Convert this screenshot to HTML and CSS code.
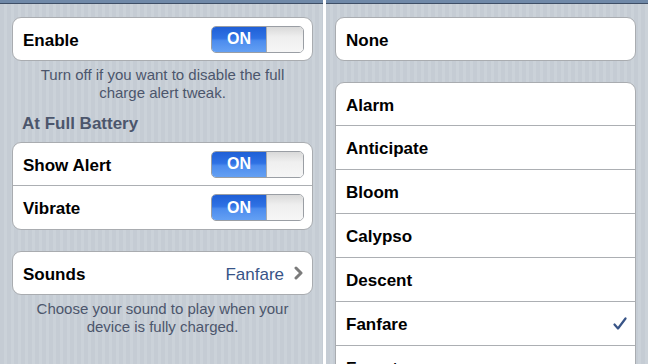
FILE: index.html
```html
<!DOCTYPE html>
<html>
<head>
<meta charset="utf-8">
<link rel="stylesheet" href="styles.css">
</head>
<body>
<div class="screen">
  <div class="panel left">
    <div class="navbar"></div>
    <div class="content">
      <div class="group first">
        <div class="row">
          <span class="label">Enable</span>
          <div class="switch"><div class="on">ON</div><div class="knob"></div></div>
        </div>
      </div>
      <div class="footer">Turn off if you want to disable the full<br>charge alert tweak.</div>
      <div class="header">At Full Battery</div>
      <div class="group">
        <div class="row">
          <span class="label">Show Alert</span>
          <div class="switch"><div class="on">ON</div><div class="knob"></div></div>
        </div>
        <div class="row">
          <span class="label">Vibrate</span>
          <div class="switch"><div class="on">ON</div><div class="knob"></div></div>
        </div>
      </div>
      <div class="group sounds">
        <div class="row">
          <span class="label">Sounds</span>
          <span class="value">Fanfare</span>
          <svg class="chevron" width="10" height="14" viewBox="0 0 10 14"><polyline points="2,2 7,7 2,12" fill="none" stroke="#7b7b7b" stroke-width="3" stroke-linecap="round" stroke-linejoin="round"/></svg>
        </div>
      </div>
      <div class="footer">Choose your sound to play when your<br>device is fully charged.</div>
    </div>
  </div>
  <div class="gap"></div>
  <div class="panel right">
    <div class="navbar"></div>
    <div class="content">
      <div class="group first">
        <div class="row"><span class="label">None</span></div>
      </div>
      <div class="group list">
        <div class="row"><span class="label">Alarm</span></div>
        <div class="row"><span class="label">Anticipate</span></div>
        <div class="row"><span class="label">Bloom</span></div>
        <div class="row"><span class="label">Calypso</span></div>
        <div class="row"><span class="label">Descent</span></div>
        <div class="row"><span class="label">Fanfare</span>
          <svg class="check" width="14" height="14" viewBox="0 0 14 14"><polyline points="1.5,7.5 5,11.5 12.5,1.5" fill="none" stroke="#385487" stroke-width="2.2" stroke-linecap="round" stroke-linejoin="round"/></svg>
        </div>
        <div class="row"><span class="label">Forest</span></div>
      </div>
    </div>
  </div>
</div>
</body>
</html>
```
FILE: styles.css
```css
html, body {
  margin: 0;
  padding: 0;
  background: #ffffff;
}
body {
  width: 648px;
  height: 364px;
  overflow: hidden;
  font-family: "Liberation Sans", Arial, sans-serif;
}
.screen {
  display: flex;
  width: 648px;
  height: 364px;
}
.panel {
  height: 364px;
  overflow: hidden;
  background: repeating-linear-gradient(90deg, #c5ccd4 0px, #c5ccd4 4px, #cbd2d9 4px, #cbd2d9 7px);
}
.panel.left { width: 323px; }
.panel.right { width: 322px; }
.gap { width: 3px; background: #ffffff; }
.navbar {
  height: 3px;
  background: #7089a8;
  border-bottom: 1px solid #3f4f66;
}
.left .content { padding: 13px 10px 0 12px; }
.right .content { padding: 13px 12px 0 9px; }
.group {
  background: #ffffff;
  border: 1px solid #a9acb0;
  border-radius: 9px;
  overflow: hidden;
}
.row {
  height: 43px;
  display: flex;
  align-items: center;
  padding: 0 8px 0 10px;
  border-top: 1px solid #acafb3;
}
.row:first-child { border-top: none; height: 42px; }
.label {
  font-weight: bold;
  font-size: 17px;
  color: #000000;
  flex: 1;
  padding-top: 3px;
}
.switch {
  width: 93px;
  height: 27px;
  display: flex;
  border-radius: 5px;
  overflow: hidden;
  border: 1px solid #9a9ea4;
  box-sizing: border-box;
}
.switch .on {
  width: 54px;
  background: linear-gradient(#1f5fd6 0%, #2f72e4 45%, #4c8cee 55%, #64a0f3 100%);
  color: #ffffff;
  font-weight: bold;
  font-size: 16px;
  display: flex;
  align-items: center;
  justify-content: center;
  border-right: 1px solid #a7abb0;
}
.switch .knob {
  flex: 1;
  background: linear-gradient(#d9d9d9 0%, #efefef 40%, #f6f6f6 100%);
}
.footer {
  margin-top: 5px;
  text-align: center;
  font-size: 15px;
  line-height: 18px;
  color: #4c566c;
}
.header {
  margin: 12px 0 8px 10px;
  font-size: 17px;
  font-weight: bold;
  line-height: 20px;
  color: #4c566c;
}
.sounds { margin-top: 21px; }
.value {
  font-size: 17px;
  color: #385487;
  margin-right: 10px;
  padding-top: 3px;
}
.chevron { margin-right: 0px; }
.list { margin-top: 21px; }
.check { margin-right: 0px; }
```
